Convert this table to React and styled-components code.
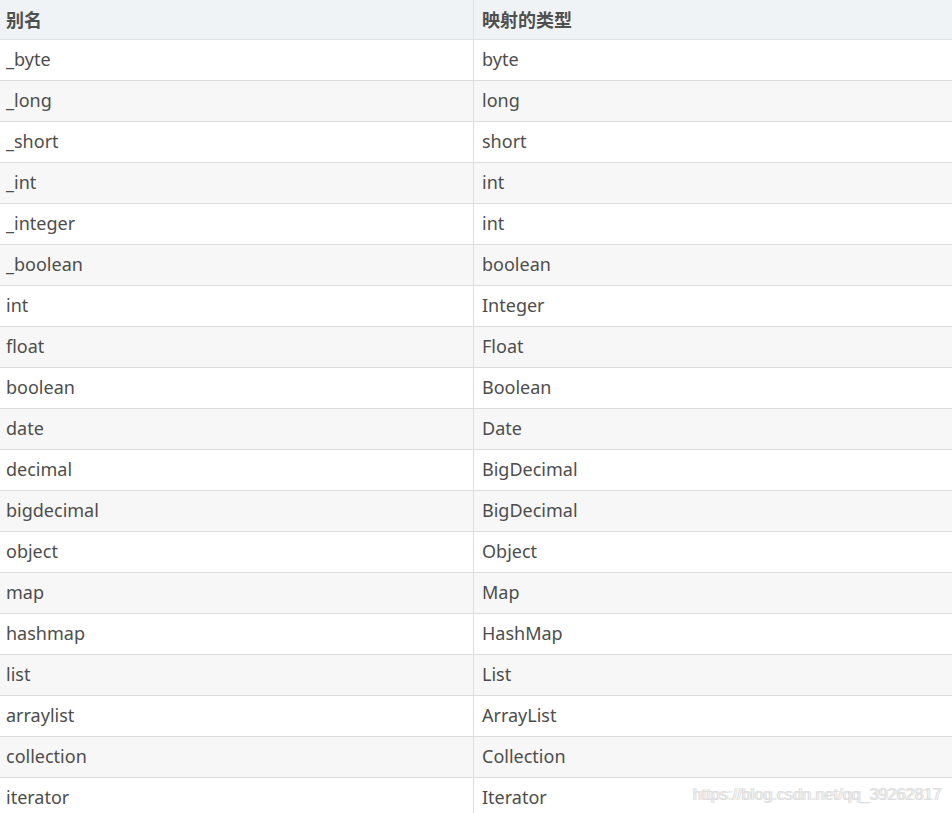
import React from "react";
import styled, { createGlobalStyle } from "styled-components";

const GlobalStyle = createGlobalStyle`
  html, body {
    margin: 0;
    padding: 0;
    background: #fff;
  }
  body {
    font-family: "Noto Sans", "Noto Sans CJK SC", sans-serif;
    overflow: hidden;
  }
`;

const Wrapper = styled.div`
  position: relative;
  width: 952px;
  height: 813px;
  overflow: hidden;
`;

const Table = styled.div`
  display: grid;
  grid-template-columns: 474px 1fr;
  width: 952px;
`;

const HeadCell = styled.div`
  height: 39px;
  line-height: 38px;
  padding: 0 ${(p) => (p.first ? "6px" : "8px")};
  background: #eff3f5;
  border-bottom: 1px solid #dfe2e5;
  border-right: ${(p) => (p.first ? "1px solid #dfe2e5" : "none")};
  font-size: 18px;
  font-weight: 700;
  color: #4f4f4f;
  font-family: "Noto Sans CJK SC", "Noto Sans", sans-serif;
`;

const Cell = styled.div`
  height: 40px;
  line-height: 38px;
  padding: 0 ${(p) => (p.first ? "6px" : "8px")};
  background: ${(p) => (p.alt ? "#f7f7f7" : "#fff")};
  border-bottom: 1px solid #dddddd;
  border-right: ${(p) => (p.first ? "1px solid #dddddd" : "none")};
  font-size: 18px;
  color: #4d4d4d;
  white-space: nowrap;
`;

const Watermark = styled.div`
  position: absolute;
  left: 692px;
  top: 786px;
  font-family: "Liberation Sans", Arial, sans-serif;
  font-size: 16px;
  color: rgba(222, 222, 222, 0.95);
  text-shadow: 2px 0 0 rgba(222, 222, 222, 0.8);
  letter-spacing: 0.1px;
`;

const rows = [
  ["_byte", "byte"],
  ["_long", "long"],
  ["_short", "short"],
  ["_int", "int"],
  ["_integer", "int"],
  ["_boolean", "boolean"],
  ["int", "Integer"],
  ["float", "Float"],
  ["boolean", "Boolean"],
  ["date", "Date"],
  ["decimal", "BigDecimal"],
  ["bigdecimal", "BigDecimal"],
  ["object", "Object"],
  ["map", "Map"],
  ["hashmap", "HashMap"],
  ["list", "List"],
  ["arraylist", "ArrayList"],
  ["collection", "Collection"],
  ["iterator", "Iterator"],
];

export default function App() {
  return (
    <Wrapper>
      <GlobalStyle />
      <Table>
        <HeadCell first>别名</HeadCell>
        <HeadCell>映射的类型</HeadCell>
        {rows.map(([alias, type], i) => (
          <React.Fragment key={alias}>
            <Cell first alt={i % 2 === 1}>{alias}</Cell>
            <Cell alt={i % 2 === 1}>{type}</Cell>
          </React.Fragment>
        ))}
      </Table>
      <Watermark>https://blog.csdn.net/qq_39262817</Watermark>
    </Wrapper>
  );
}
